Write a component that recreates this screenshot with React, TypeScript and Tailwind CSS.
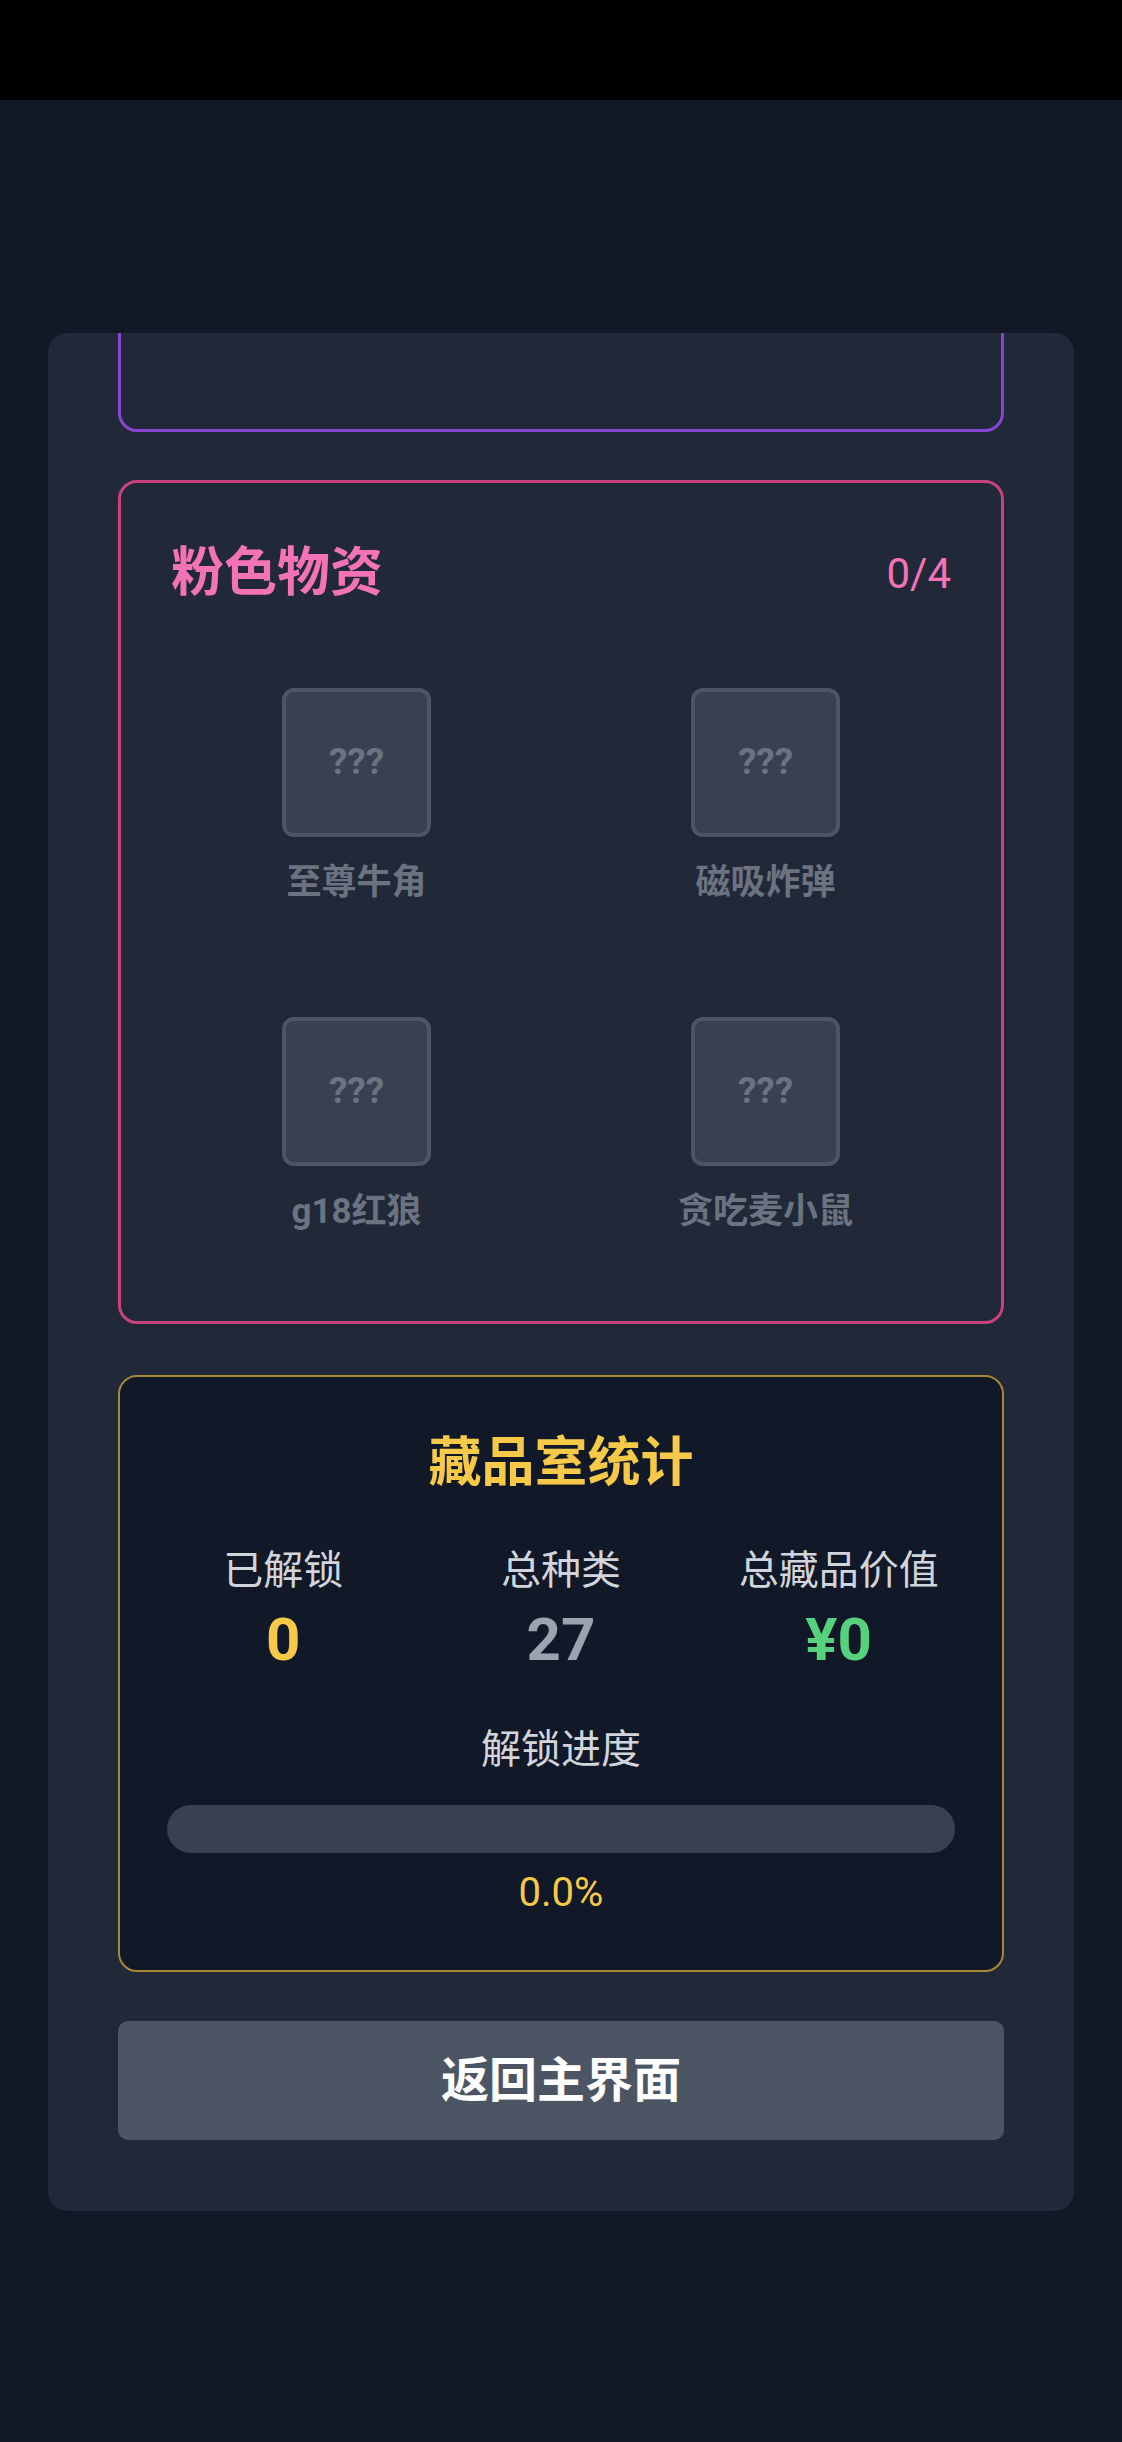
const items = ["至尊牛角", "磁吸炸弹", "g18红狼", "贪吃麦小鼠"];

function LockedItem({ name }: { name: string }) {
  return (
    <div className="flex flex-col items-center p-[35px]">
      <div className="flex h-[149px] w-[149px] items-center justify-center rounded-[12px] border-[4px] border-[#4b5563] bg-[#374151]">
        <span className="pb-[2px] text-[37px] font-bold leading-none text-[#6b7280]">???</span>
      </div>
      <div className="mt-[20px] text-[35px] font-bold leading-[52px] text-[#6b7280]">{name}</div>
    </div>
  );
}

function Stat({ label, value, color }: { label: string; value: string; color: string }) {
  return (
    <div className="flex flex-col items-center">
      <div className="text-[40px] leading-[62px] text-[#d1d5db]">{label}</div>
      <div className={`text-[60px] font-bold leading-[76px] ${color}`}>{value}</div>
    </div>
  );
}

export default function App() {
  return (
    <div
      className="min-h-screen w-full bg-[#121826] pb-[232px]"
      style={{ fontFamily: "Roboto, 'Noto Sans CJK SC', sans-serif" }}
    >
      {/* status bar */}
      <div className="h-[100px] bg-black" />

      <div className="mx-[48px] mt-[233px] flex flex-col overflow-hidden rounded-[19px] bg-[#212837] px-[70px] pb-[71px]">
        {/* previous section, scrolled mostly out of view */}
        <div className="-mt-[301px] h-[400px] rounded-[19px] border-[3px] border-[#8a44d4]" />

        {/* pink tier */}
        <div className="mt-[48px] rounded-[19px] border-[3px] border-[#c9427c] px-[50px] pb-[48px] pt-[55px]">
          <div className="flex h-[70px] items-center justify-between">
            <h2 className="text-[53px] font-bold leading-[70px] text-[#f472b6]">粉色物资</h2>
            <span className="text-[42px] text-[#f472b6]">0/4</span>
          </div>
          <div className="mt-[45px] grid grid-cols-2 gap-[38px]">
            {items.map((n) => (
              <LockedItem key={n} name={n} />
            ))}
          </div>
        </div>

        {/* stats */}
        <div className="mt-[51px] rounded-[19px] border-[2px] border-[#a8873a] bg-[#111827] px-[47px] pb-[49px] pt-[51px]">
          <h3 className="text-center text-[53px] font-bold leading-[70px] text-[#f7c948]">藏品室统计</h3>
          <div className="mt-[42px] grid grid-cols-3 gap-x-[45px]">
            <Stat label="已解锁" value="0" color="text-[#f7c948]" />
            <Stat label="总种类" value="27" color="text-[#9ca3af]" />
            <Stat label="总藏品价值" value="¥0" color="text-[#56d27f]" />
          </div>
          <div className="mt-[41px] text-center text-[40px] leading-[62px] text-[#d1d5db]">解锁进度</div>
          <div className="mt-[24px] h-[48px] w-full rounded-full bg-[#374151]" />
          <div className="mt-[12px] text-center text-[40px] leading-[56px] text-[#f7c948]">0.0%</div>
        </div>

        <button className="mt-[49px] h-[119px] w-full rounded-[10px] bg-[#4b5563] text-[48px] font-bold text-white">
          返回主界面
        </button>
      </div>
    </div>
  );
}
